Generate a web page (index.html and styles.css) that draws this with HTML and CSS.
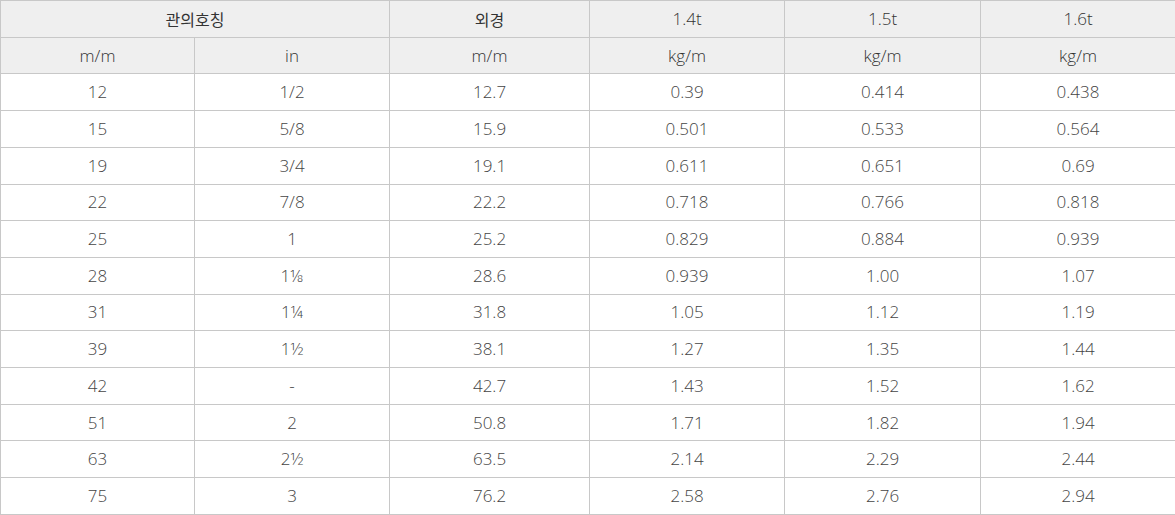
FILE: index.html
```html
<!DOCTYPE html>
<html lang="ko">
<head>
<meta charset="utf-8">
<link rel="stylesheet" href="styles.css">
</head>
<body>
<table class="spec">
<colgroup>
<col class="c1"><col class="c2"><col class="c3"><col class="c4"><col class="c5"><col class="c6">
</colgroup>
<thead>
<tr><th class="ko" colspan="2">관의호칭</th><th class="ko">외경</th><th>1.4t</th><th>1.5t</th><th>1.6t</th></tr>
<tr><th>m/m</th><th>in</th><th>m/m</th><th>kg/m</th><th>kg/m</th><th>kg/m</th></tr>
</thead>
<tbody>
<tr><td>12</td><td>1/2</td><td>12.7</td><td>0.39</td><td>0.414</td><td>0.438</td></tr>
<tr><td>15</td><td>5/8</td><td>15.9</td><td>0.501</td><td>0.533</td><td>0.564</td></tr>
<tr><td>19</td><td>3/4</td><td>19.1</td><td>0.611</td><td>0.651</td><td>0.69</td></tr>
<tr><td>22</td><td>7/8</td><td>22.2</td><td>0.718</td><td>0.766</td><td>0.818</td></tr>
<tr><td>25</td><td>1</td><td>25.2</td><td>0.829</td><td>0.884</td><td>0.939</td></tr>
<tr><td>28</td><td>1⅛</td><td>28.6</td><td>0.939</td><td>1.00</td><td>1.07</td></tr>
<tr><td>31</td><td>1¼</td><td>31.8</td><td>1.05</td><td>1.12</td><td>1.19</td></tr>
<tr><td>39</td><td>1½</td><td>38.1</td><td>1.27</td><td>1.35</td><td>1.44</td></tr>
<tr><td>42</td><td>-</td><td>42.7</td><td>1.43</td><td>1.52</td><td>1.62</td></tr>
<tr><td>51</td><td>2</td><td>50.8</td><td>1.71</td><td>1.82</td><td>1.94</td></tr>
<tr><td>63</td><td>2½</td><td>63.5</td><td>2.14</td><td>2.29</td><td>2.44</td></tr>
<tr><td>75</td><td>3</td><td>76.2</td><td>2.58</td><td>2.76</td><td>2.94</td></tr>
</tbody>
</table>
</body>
</html>
```
FILE: styles.css
```css
html, body {
  margin: 0;
  padding: 0;
  background: #fff;
}
.spec {
  width: 1175px;
  border-collapse: collapse;
  table-layout: fixed;
  font-family: "Open Sans", "Noto Sans CJK KR", sans-serif;
  font-weight: 300;
  font-size: 17px;
  color: #444;
}
.c1 { width: 194px; }
.c2 { width: 195px; }
.c3 { width: 200px; }
.c4 { width: 195px; }
.c5 { width: 196px; }
.c6 { width: 195px; }
.spec tr {
  height: 36.71px;
}
.spec th, .spec td {
  border: 1px solid #c8c8c8;
  text-align: center;
  vertical-align: middle;
  padding: 0;
  font-weight: 300;
  line-height: 20px;
}
.spec th {
  background: #efefef;
  color: #333;
}
.spec .ko {
  font-family: "Noto Sans CJK KR", sans-serif;
  font-size: 16px;
  font-weight: 400;
}
```
